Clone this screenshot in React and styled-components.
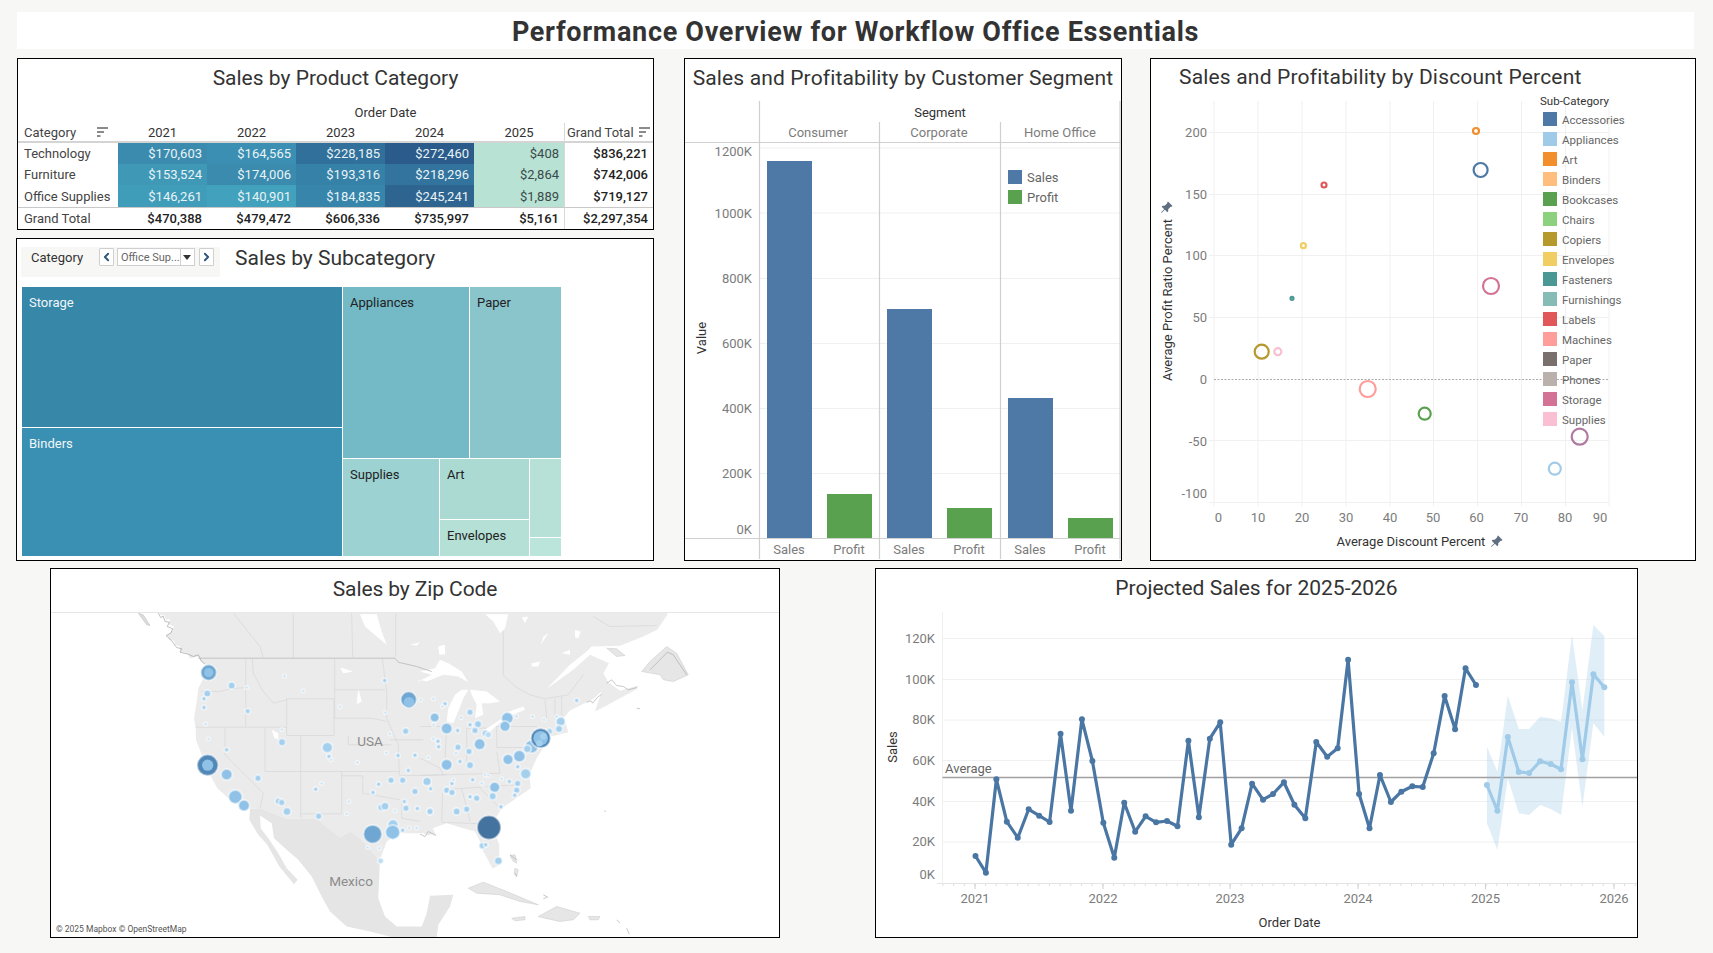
import React from 'react'
import styled, { createGlobalStyle } from 'styled-components'
import { BsPinAngleFill } from 'react-icons/bs'
import { ChevronLeft, ChevronRight } from 'lucide-react'

const Global = createGlobalStyle`
  html, body { margin: 0; padding: 0; background: #f7f7f5; }
  * { box-sizing: border-box; }
`

const Page = styled.div`
  width: 1713px;
  height: 953px;
  overflow: hidden;
  padding-top: 12px;
  background: #f7f7f5;
  font-family: Roboto, "Noto Sans", sans-serif;
  color: #333;
`
const TitleBar = styled.h1`
  margin: 0 19px 9px 17px;
  height: 37px;
  padding-top: 2px;
  background: #fff;
  text-align: center;
  font-size: 27px;
  line-height: 37px;
  letter-spacing: 0.7px;
  font-weight: 700;
  color: #333;
`
const TopRow = styled.div`
  display: flex;
  height: 503px;
  padding-left: 16px;
`
const LeftColumn = styled.div`
  width: 638px;
  display: flex;
  flex-direction: column;
  gap: 8px;
  margin-right: 30px;
`
const BottomRow = styled.div`
  display: flex;
  height: 370px;
  margin-top: 7px;
  padding-left: 50px;
`
const Panel = styled.section`
  background: #fff;
  border: 1px solid #000;
  width: ${p => p.$w}px;
  height: ${p => p.$h ? p.$h + 'px' : '100%'};
  margin-left: ${p => p.$ml || 0}px;
  margin-right: ${p => p.$mr || 0}px;
  flex-shrink: 0;
  overflow: hidden;
`
const PanelTitle = styled.h2`
  margin: 0;
  height: ${p => p.$h || 42}px;
  line-height: ${p => p.$lh || 38}px;
  font-size: 21px;
  font-weight: 400;
  color: #333;
  letter-spacing: ${p => p.$ls || 0}px;
  text-align: ${p => p.$left ? 'left' : 'center'};
  padding-left: ${p => p.$left || 0}px;
  border-bottom: ${p => p.$rule ? '1px solid #e6e6e6' : 'none'};
  white-space: nowrap;
`
const Table = styled.div`
  display: grid;
  grid-template-columns: 100px repeat(4, 89px) 90px 89px;
  grid-template-rows: 20px 20px 21px 21px 22px 22px;
  font-size: 13px;
`
const Cell = styled.div`
  display: flex;
  align-items: center;
  justify-content: ${p => p.$align || 'flex-end'};
  padding: 0 ${p => p.$pad ?? 5}px 0 ${p => p.$padL ?? 0}px;
  background: ${p => p.$bg || 'transparent'};
  color: ${p => p.$color || '#222'};
  font-weight: ${p => p.$bold ? 500 : 400};
  border-left: ${p => p.$divider ? '1px solid #d8d8d8' : 'none'};
  border-bottom: ${p => p.$rule ? '2px solid #d4d4d4' : 'none'};
  border-top: ${p => p.$top ? '1px solid #c8c8c8' : 'none'};
  white-space: nowrap;
`
const OrderDate = styled.div`
  grid-column: 2 / 8;
  display: flex;
  justify-content: center;
  align-items: center;
  padding-bottom: 2px;
  color: #333;
  font-size: 13px;
`
const SortLines = styled.svg`
  width: 11px;
  height: 11px;
  flex-shrink: 0;
  margin-left: ${p => p.$ml}px;
`
const SubHeader = styled.div`
  display: flex;
  padding: 8px 0 0 4px;
`
const FilterBox = styled.div`
  width: 199px;
  height: 30px;
  background: #f7f7f5;
  display: flex;
  align-items: flex-start;
  padding: 1px 0 0 10px;
  margin-right: 15px;
  font-size: 13px;
  color: #333;
`
const FilterLabel = styled.span`
  width: 68px;
  line-height: 20px;
`
const StepButton = styled.div`
  width: 15px;
  height: 18px;
  background: #fff;
  border: 1px solid #cfcfcf;
  border-radius: 1px;
  display: flex;
  align-items: center;
  justify-content: center;
  color: #2f5679;
  margin-right: ${p => p.$mr || 0}px;
`
const Dropdown = styled.div`
  width: 78px;
  height: 18px;
  background: #fff;
  border: 1px solid #cfcfcf;
  display: flex;
  align-items: center;
  margin-right: 4px;
  font-size: 11px;
  color: #666;
`
const DropdownText = styled.span`
  flex: 1;
  padding-left: 3px;
  white-space: nowrap;
`
const DropdownArrow = styled.span`
  width: 18px;
  height: 100%;
  border-left: 1px solid #cfcfcf;
  display: flex;
  align-items: center;
  justify-content: center;
  &::before {
    content: "";
    border-left: 4.5px solid transparent;
    border-right: 4.5px solid transparent;
    border-top: 5px solid #333;
  }
`
const SubTitle = styled.h2`
  margin: 0;
  font-size: 21px;
  font-weight: 400;
  line-height: 22px;
  color: #333;
`
const Treemap = styled.div`
  display: flex;
  gap: 1px;
  width: 539px;
  height: 269px;
  margin: 10px 0 0 5px;
  background: #fff;
`
const TreeColumn = styled.div`
  display: flex;
  flex-direction: column;
  gap: 1px;
  width: ${p => p.$w ? p.$w + 'px' : 'auto'};
  height: ${p => p.$h ? p.$h + 'px' : '100%'};
  flex-shrink: 0;
`
const TreeRow = styled.div`
  display: flex;
  gap: 1px;
  height: ${p => p.$h}px;
  flex-shrink: 0;
`
const Tile = styled.div`
  background: ${p => p.$bg};
  color: ${p => p.$dark ? '#f1f6f8' : '#222'};
  width: ${p => p.$w ? p.$w + 'px' : 'auto'};
  height: ${p => p.$h ? p.$h + 'px' : 'auto'};
  flex: ${p => (p.$w || p.$h) ? '0 0 auto' : '1'};
  font-size: 13px;
  line-height: 16px;
  padding: 8px 0 0 7px;
`
const ChartSvg = styled.svg`
  display: block;
  overflow: visible;
`
const Label = styled.text`
  font-size: ${p => p.$size || 13}px;
  fill: ${p => p.$fill || '#7c7c7c'};
  text-anchor: ${p => p.$anchor || 'middle'};
  dominant-baseline: central;
`
const Grid = styled.line`
  stroke: ${p => p.$stroke || '#f0f0f0'};
  stroke-width: ${p => p.$width || 1};
  stroke-dasharray: ${p => p.$dash || 'none'};
`

const SortIcon = ({ ml }) => (
  <SortLines $ml={ml} viewBox="0 0 11 11">
    <path d="M0 1h11M0 5h7M0 9h3.5" stroke="#666" strokeWidth="1.6" fill="none" />
  </SortLines>
)

const TABLE = [
  ['Technology', [['$170,603', '#3b8bae'], ['$164,565', '#3a8fb2'], ['$228,185', '#30709a'], ['$272,460', '#2a5b8a'], ['$408', '#b8e2d4']], '$836,221'],
  ['Furniture', [['$153,524', '#3f98b6'], ['$174,006', '#3a8bae'], ['$193,316', '#3681a8'], ['$218,296', '#32749e'], ['$2,864', '#b8e2d4']], '$742,006'],
  ['Office Supplies', [['$146,261', '#409db9'], ['$140,901', '#42a1bc'], ['$184,835', '#3785aa'], ['$245,241', '#2e6590'], ['$1,889', '#b8e2d4']], '$719,127'],
]
const TOTALS = ['$470,388', '$479,472', '$606,336', '$735,997', '$5,161', '$2,297,354']

const SalesTable = () => (
  <Table>
    <div />
    <OrderDate>Order Date</OrderDate>
    <Cell $align="flex-start" $padL={6} $rule $color="#444">Category<SortIcon ml={21} /></Cell>
    {['2021', '2022', '2023', '2024', '2025'].map(y => <Cell key={y} $align="center" $pad={0} $rule $color="#333">{y}</Cell>)}
    <Cell $align="flex-start" $padL={2} $pad={0} $rule $divider $color="#444">Grand Total<SortIcon ml={5} /></Cell>
    {TABLE.map(([name, cells, total]) => (
      <React.Fragment key={name}>
        <Cell $align="flex-start" $padL={6} $color="#444">{name}</Cell>
        {cells.map(([v, bg], i) => <Cell key={v} $bg={bg} $color={i < 4 ? '#e9f3f6' : '#3a4a4a'}>{v}</Cell>)}
        <Cell $divider $bold>{total}</Cell>
      </React.Fragment>
    ))}
    <Cell $align="flex-start" $padL={6} $color="#444" $top>Grand Total</Cell>
    {TOTALS.map((v, i) => <Cell key={v} $bold $top $divider={i === 5}>{v}</Cell>)}
  </Table>
)

const SubcategoryTree = () => (
  <Treemap>
    <TreeColumn $w={320}>
      <Tile $bg="#3687a8" $dark $h={140}>Storage</Tile>
      <Tile $bg="#3990b3" $dark>Binders</Tile>
    </TreeColumn>
    <TreeColumn $w={218}>
      <TreeRow $h={171}>
        <Tile $bg="#73b9c6" $w={126}>Appliances</Tile>
        <Tile $bg="#8ac5cc">Paper</Tile>
      </TreeRow>
      <TreeRow $h={97}>
        <Tile $bg="#9dd2d2" $w={96}>Supplies</Tile>
        <TreeColumn $w={89}>
          <Tile $bg="#aadad2" $h={60}>Art</Tile>
          <Tile $bg="#b4e0d5">Envelopes</Tile>
        </TreeColumn>
        <TreeColumn $w={31}>
          <Tile $bg="#b7e1d6" $h={78} />
          <Tile $bg="#bbe4da" />
        </TreeColumn>
      </TreeRow>
    </TreeColumn>
  </Treemap>
)

const SEGMENT_GRID = [148, 213, 278.5, 343.5, 408.5, 473.5]
const SEGMENT_TICKS = [['1200K', 151], ['1000K', 213], ['800K', 278], ['600K', 343], ['400K', 408], ['200K', 473], ['0K', 529]]
const SEGMENT_BARS = [
  [767, 161, '#4e79a7', 'Sales'], [827, 494, '#59a14f', 'Profit'],
  [887, 309, '#4e79a7', 'Sales'], [947, 508, '#59a14f', 'Profit'],
  [1008, 398, '#4e79a7', 'Sales'], [1068, 518, '#59a14f', 'Profit'],
]

const SegmentChart = () => (
  <ChartSvg width="436" height="459" viewBox="685 101 436 459">
    {SEGMENT_GRID.map(y => <Grid key={y} x1="759" x2="1121" y1={y} y2={y} />)}
    <Grid x1="685" x2="1121" y1="142.5" y2="142.5" $stroke="#d0d0d0" $width="1.2" />
    <Grid x1="685" x2="1121" y1="538.5" y2="538.5" $stroke="#d0d0d0" $width="1.2" />
    <Grid x1="759.5" x2="759.5" y1="101" y2="559" $stroke="#cfcfcf" $width="1.2" />
    <Grid x1="879.5" x2="879.5" y1="122" y2="559" $stroke="#cfcfcf" $width="1.2" />
    <Grid x1="1000.5" x2="1000.5" y1="122" y2="559" $stroke="#cfcfcf" $width="1.2" />
    <Grid x1="1120" x2="1120" y1="101" y2="559" $stroke="#cfcfcf" $width="1.2" />
    {SEGMENT_BARS.map(([x, top, fill, name]) => (
      <g key={x}>
        <rect x={x} y={top} width="45" height={538 - top} fill={fill} />
        <Label x={x + 22} y="549">{name}</Label>
      </g>
    ))}
    {SEGMENT_TICKS.map(([t, y]) => <Label key={t} x="752" y={y} $anchor="end">{t}</Label>)}
    <Label x="940" y="112.5" $fill="#333">Segment</Label>
    <Label x="818" y="132.5">Consumer</Label>
    <Label x="939" y="132.5">Corporate</Label>
    <Label x="1060" y="132.5">Home Office</Label>
    <Label x="701" y="338" $fill="#333" transform="rotate(-90 701 338)">Value</Label>
    <rect x="1008" y="170" width="14" height="14" fill="#4e79a7" />
    <Label x="1027" y="177.5" $anchor="start" $fill="#666">Sales</Label>
    <rect x="1008" y="190" width="14" height="14" fill="#59a14f" />
    <Label x="1027" y="197.5" $anchor="start" $fill="#666">Profit</Label>
  </ChartSvg>
)

const SUBCATS = [
  ['Accessories', '#4e79a7'], ['Appliances', '#a0cbe8'], ['Art', '#f28e2b'], ['Binders', '#ffbe7d'],
  ['Bookcases', '#59a14f'], ['Chairs', '#8cd17d'], ['Copiers', '#b6992d'], ['Envelopes', '#f1ce63'],
  ['Fasteners', '#499894'], ['Furnishings', '#86bcb6'], ['Labels', '#e15759'], ['Machines', '#ff9d9a'],
  ['Paper', '#79706e'], ['Phones', '#bab0ac'], ['Storage', '#d37295'], ['Supplies', '#fabfd2'],
]
const DISCOUNT_X = [1214, 1258, 1302, 1346, 1390, 1433.5, 1477.5, 1521.5, 1565.5, 1609]
const DISCOUNT_XT = [['0', 1218.5], ['10', 1258], ['20', 1302], ['30', 1346], ['40', 1390], ['50', 1433], ['60', 1476.5], ['70', 1521], ['80', 1565], ['90', 1600]]
const DISCOUNT_Y = [[132.5, '200', 132], [194.5, '150', 194], [255.5, '100', 255.5], [317.5, '50', 317], [440.5, '-50', 441], [502.5, '-100', 493]]
const RINGS = [
  [1476, 131, 3, '#f28e2b'], [1480.6, 170, 7, '#4e79a7'], [1324, 185, 2.5, '#e15759'],
  [1303.4, 245.7, 2.5, '#f1ce63'], [1491, 286, 8, '#d37295'], [1292, 298.3, 1.5, '#499894'],
  [1261.7, 351.7, 7, '#b6992d'], [1277.8, 351.7, 3.5, '#fabfd2'], [1367.7, 389, 8, '#ff9d9a'],
  [1424.7, 413.7, 6, '#59a14f'], [1579.7, 436.7, 8, '#b07aa1'], [1554.8, 468.7, 6, '#a0cbe8'],
]

const DiscountChart = () => (
  <ChartSvg width="544" height="459" viewBox="1151 101 544 459">
    {DISCOUNT_X.map(x => <Grid key={x} x1={x} x2={x} y1="101" y2="506" />)}
    {DISCOUNT_Y.map(([y]) => <Grid key={y} x1="1209" x2="1609" y1={y} y2={y} />)}
    <Grid x1="1214" x2="1609" y1="379.5" y2="379.5" $stroke="#aaa" $dash="2 1.5" />
    {DISCOUNT_Y.map(([, t, y]) => <Label key={t} x="1207" y={y} $anchor="end">{t}</Label>)}
    <Label x="1207" y="379" $anchor="end">0</Label>
    {DISCOUNT_XT.map(([t, x]) => <Label key={t} x={x} y="517.5">{t}</Label>)}
    <Label x="1411" y="541.5" $fill="#333">Average Discount Percent</Label>
    <BsPinAngleFill x="1490" y="535" size="13" color="#5f6e80" />
    <Label x="1167" y="300" $fill="#333" transform="rotate(-90 1167 300)">Average Profit Ratio Percent</Label>
    <BsPinAngleFill x="1160" y="201" size="13" color="#5f6e80" />
    {RINGS.map(([x, y, r, c]) => (
      <circle key={x} cx={x} cy={y} r={r} fill="none" stroke={c} strokeWidth="2.2" />
    ))}
    <Label x="1540" y="101" $anchor="start" $size={11.5} $fill="#333">Sub-Category</Label>
    {SUBCATS.map(([name, c], i) => (
      <g key={name}>
        <rect x="1543" y={112 + i * 20} width="14" height="14" fill={c} />
        <Label x="1562" y={119.5 + i * 20} $anchor="start" $size={11.5} $fill="#666">{name}</Label>
      </g>
    ))}
  </ChartSvg>
)

// map outlines were read off two crops of the picture, so points come in crop coordinates
const W = (x, y) => [130 + x / 3, 612 + y / 3]
const E = (x, y) => [420 + x / 3, 612 + y / 3]
const pts = (conv, list) => list.map(([x, y]) => conv(x, y))
const str = list => list.map(p => p[0].toFixed(1) + ',' + p[1].toFixed(1)).join(' ')

const LAND_WEST = [[85, 3], [95, 12], [102, 10], [108, 25], [120, 22], [116, 38], [132, 45], [126, 60], [110, 72], [118, 85], [132, 88], [136, 100], [150, 105], [150, 120], [172, 125], [180, 140], [205, 135], [212, 150], [228, 160], [218, 172], [212, 190], [218, 205], [205, 230], [200, 270], [192, 320], [197, 350], [198, 385], [215, 430], [235, 480], [262, 530], [300, 565], [330, 575], [360, 592], [390, 590], [470, 622], [512, 622], [560, 620], [595, 650], [630, 678], [660, 660], [690, 680], [730, 725], [750, 745], [770, 690], [810, 665], [880, 665], [895, 672], [905, 668], [920, 672]]
const LAND_EAST = [[50, 675], [38, 650], [80, 635], [130, 650], [165, 660], [178, 685], [190, 720], [218, 772], [237, 760], [238, 700], [215, 640], [245, 590], [292, 558], [332, 530], [328, 490], [350, 440], [375, 400], [392, 375], [445, 362], [432, 318], [450, 297], [500, 272], [520, 262], [545, 240], [525, 300], [560, 282], [652, 232], [655, 222], [600, 238], [565, 212], [550, 185], [567, 155], [510, 130], [460, 175], [380, 232], [450, 160], [500, 120], [515, 105], [600, 103], [670, 75], [712, 55], [742, 10], [742, 3]]
const MAINLAND = str([...pts(W, LAND_WEST), ...pts(E, LAND_EAST)])
const MEXICO = str([
  ...pts(W, [[360, 592], [358, 625], [385, 670], [412, 700], [448, 765], [492, 818], [503, 805], [470, 770], [445, 725], [415, 680], [392, 650], [390, 612], [425, 635], [432, 680], [470, 715], [505, 745], [545, 795], [575, 855], [600, 900], [650, 945], [720, 960], [790, 978]]),
  ...pts(E, [[50, 978], [55, 940], [90, 885], [100, 850], [30, 853]]),
  ...pts(W, [[890, 905], [875, 945], [800, 945], [765, 915], [745, 860], [748, 790], [750, 745], [730, 725], [690, 680], [660, 660], [630, 678], [595, 650], [560, 620], [512, 622], [470, 622], [390, 590]]),
])
const ISLANDS = [
  [[665, 180], [690, 150], [740, 105], [770, 125], [805, 190], [760, 210], [730, 205], [720, 190]],
  [[145, 830], [190, 812], [260, 840], [355, 880], [300, 870], [240, 850], [170, 845]],
  [[355, 915], [410, 885], [480, 905], [460, 925], [420, 930], [375, 920]],
  [[275, 920], [315, 915], [315, 925], [285, 928]],
  [[505, 915], [540, 915], [535, 925], [510, 925]],
  [[560, 110], [590, 112], [615, 132], [590, 135]],
  [[270, 732], [285, 730], [290, 755], [280, 750]],
  [[285, 770], [295, 775], [290, 795], [282, 785]],
].map(l => str(pts(E, l)))
const ALASKA = str(pts(W, [[25, 5], [40, 10], [60, 42], [50, 40]]))
const LAKES = [
  [...pts(W, [[860, 212], [905, 190]]), ...pts(E, [[0, 180], [45, 170], [60, 145], [85, 155], [125, 180], [145, 212], [115, 195], [70, 190], [20, 210], [0, 205]])],
  pts(E, [[125, 235], [105, 250], [85, 290], [80, 330], [100, 335], [115, 300], [130, 260], [145, 235]]),
  pts(E, [[150, 235], [200, 240], [240, 270], [210, 275], [185, 275], [190, 310], [165, 320], [170, 280], [155, 250]]),
  pts(E, [[195, 355], [240, 325], [250, 325], [210, 360]]),
  pts(E, [[255, 305], [310, 285], [315, 295], [265, 315]]),
  pts(E, [[195, 8], [265, 8], [255, 50], [240, 65], [220, 30]]),
  pts(E, [[55, 105], [72, 100], [76, 128], [58, 130]]),
  pts(E, [[305, 18], [325, 15], [315, 35]]),
  pts(E, [[385, 65], [362, 100], [370, 75]]),
  pts(E, [[465, 55], [482, 60], [475, 80], [465, 78]]),
  pts(E, [[425, 125], [450, 115], [450, 130]]),
  pts(E, [[335, 155], [360, 150], [355, 165], [335, 165]]),
  pts(W, [[690, 8], [740, 8], [755, 60], [770, 100], [740, 75], [705, 45]]),
  pts(W, [[840, 100], [870, 92], [860, 102]]),
  pts(W, [[925, 110], [945, 100], [945, 125], [928, 125]]),
  pts(W, [[425, 355], [445, 365], [445, 385], [432, 378]]),
  pts(W, [[630, 168], [670, 180], [640, 185]]),
  pts(W, [[685, 230], [695, 270], [680, 278]]),
].map(str)
const BORDERS_W = [
  [[205, 140], [795, 140], [805, 152], [860, 165], [905, 180]],
  [[215, 240], [270, 240], [300, 232], [348, 228]],
  [[347, 140], [347, 345]], [[367, 140], [370, 185], [400, 240], [430, 275], [470, 265]],
  [[197, 347], [470, 347]], [[470, 262], [612, 262], [612, 372], [470, 372], [470, 262]],
  [[614, 140], [614, 320], [725, 320], [770, 330]], [[614, 235], [765, 235]],
  [[757, 140], [770, 240], [770, 320], [805, 400], [808, 490]],
  [[512, 372], [512, 620]], [[655, 372], [655, 400], [785, 400]], [[405, 347], [405, 480], [655, 480]],
  [[635, 480], [635, 607], [512, 607]], [[635, 493], [698, 493], [698, 545], [810, 565]],
  [[655, 480], [808, 480]], [[285, 347], [285, 430], [400, 545], [390, 590]],
  [[780, 385], [880, 385]], [[808, 493], [950, 490]], [[815, 565], [815, 620], [870, 630]],
  [[310, 5], [390, 105], [400, 138]], [[490, 5], [490, 138]], [[665, 5], [668, 138]], [[797, 5], [797, 135]],
]
const BORDERS_E = [
  [[0, 492], [240, 485]], [[140, 350], [140, 450]], [[80, 350], [75, 440]], [[65, 535], [185, 527]],
  [[125, 530], [150, 630]], [[68, 540], [65, 630]], [[65, 632], [210, 638]], [[180, 530], [240, 590]],
  [[200, 525], [290, 520]], [[230, 345], [230, 408], [330, 408]], [[230, 345], [350, 345]],
  [[375, 265], [380, 320]], [[405, 260], [405, 320]], [[425, 255], [425, 310]], [[140, 350], [200, 350]],
  [[0, 345], [80, 345]], [[0, 440], [60, 470], [70, 490]], [[240, 485], [230, 420]],
  [[250, 60], [250, 190], [285, 225], [330, 250], [375, 262], [445, 250], [490, 190]],
  [[520, 15], [570, 45], [710, 42]],
]
// dark jagged coast where the reference has fjords and islets
const COAST_W = [[[85, 5], [92, 18], [100, 14], [105, 30], [118, 32], [112, 45], [128, 52], [122, 65], [108, 72], [125, 88], [140, 108], [155, 112], [150, 122], [175, 128], [190, 135], [205, 130], [215, 150], [225, 158]]]
const COAST_E = [
  [[500, 272], [512, 268], [518, 275], [532, 258], [545, 248]],
  [[560, 215], [575, 205], [590, 222], [610, 225], [625, 235], [650, 228]],
  [[690, 175], [715, 150], [742, 122], [760, 130], [780, 160], [800, 190]],
  [[0, 668], [15, 675], [25, 660], [48, 672]],
  [[270, 730], [280, 738], [292, 745]], [[285, 785], [290, 795]], [[370, 850], [385, 858]], [[370, 862], [380, 858]], [[590, 925], [600, 935]], [[620, 950], [628, 968]], [[553, 598], [558, 600]], [[650, 290], [660, 292]],
]
const BLUE = ['#b9dcf2', '#a4d0ee', '#8fc2e6', '#6fa7d2', '#5288b8', '#44739f']
// x, y, radius in crop pixels, colour step, and 1 for a bubble that sits inside a larger one
const BUBBLES_W = [
  [236, 183, 22, 3], [236, 183, 12, 2, 1], [305, 222, 9, 1], [232, 246, 9, 1], [222, 262, 5, 1], [222, 288, 5, 1], [227, 338, 3, 0], [235, 382, 3, 0], [350, 228, 3, 0], [353, 299, 6, 1], [463, 194, 3, 0], [520, 238, 3, 0], [630, 286, 3, 0], [764, 207, 5, 1],
  [836, 264, 22, 3], [837, 272, 14, 2, 1], [766, 303, 3, 0], [872, 265, 3, 0], [910, 262, 3, 0], [945, 277, 5, 1], [937, 285, 3, 0], [914, 318, 12, 2], [911, 340, 3, 0], [827, 359, 8, 1], [950, 351, 15, 2], [780, 367, 3, 0], [924, 389, 5, 1], [926, 406, 5, 1], [910, 382, 3, 0],
  [456, 392, 9, 1], [456, 354, 3, 0], [592, 408, 14, 1], [597, 435, 5, 1], [603, 445, 3, 0], [290, 415, 5, 1], [233, 461, 30, 4], [233, 461, 15, 2, 1], [290, 489, 15, 2], [316, 556, 19, 2], [342, 582, 15, 2], [384, 500, 8, 1], [557, 533, 5, 1], [575, 516, 3, 0], [445, 569, 8, 1], [455, 573, 8, 1], [471, 600, 10, 1], [566, 614, 8, 1], [650, 607, 3, 0], [657, 570, 3, 0], [682, 453, 3, 0], [769, 424, 3, 0], [804, 432, 5, 1], [855, 431, 5, 1], [895, 438, 3, 0], [835, 477, 5, 1], [950, 460, 15, 2], [746, 518, 5, 1], [729, 543, 5, 1], [783, 506, 8, 1], [818, 506, 8, 1], [891, 510, 11, 1], [902, 532, 5, 1], [855, 540, 8, 1], [950, 537, 8, 1], [823, 570, 5, 1], [828, 590, 8, 1], [795, 598, 3, 0], [862, 591, 5, 1], [900, 600, 8, 1], [753, 588, 8, 1], [765, 584, 10, 1], [789, 640, 14, 1], [788, 662, 20, 2], [728, 668, 26, 3], [818, 656, 5, 1], [838, 649, 3, 0], [860, 649, 3, 0], [713, 708, 3, 0], [748, 710, 3, 0], [752, 748, 7, 0],
]
const BUBBLES_E = [
  [150, 302, 8, 1], [174, 338, 9, 1], [123, 318, 3, 0], [150, 340, 5, 1], [165, 357, 8, 1], [113, 357, 5, 1], [196, 365, 8, 1], [205, 370, 8, 0], [179, 398, 15, 2], [147, 420, 8, 1], [114, 407, 8, 1], [108, 425, 3, 0], [120, 450, 5, 1], [150, 461, 9, 1],
  [262, 320, 16, 2], [255, 344, 14, 2], [290, 314, 3, 0], [338, 315, 3, 0], [372, 325, 3, 0], [422, 330, 12, 1], [417, 352, 9, 1], [388, 360, 8, 1], [470, 267, 5, 1], [410, 315, 3, 0], [335, 405, 18, 2], [322, 412, 10, 1], [362, 380, 28, 4], [362, 380, 20, 2, 1], [370, 375, 8, 1, 1], [358, 395, 8, 1, 1], [298, 434, 16, 2], [264, 444, 14, 2], [293, 466, 5, 1], [317, 487, 14, 1], [293, 516, 8, 1], [268, 510, 5, 1], [224, 527, 14, 2], [290, 536, 8, 1], [218, 554, 9, 1], [284, 551, 5, 1], [245, 502, 3, 0], [204, 492, 3, 0], [158, 505, 5, 1], [96, 516, 5, 1], [100, 505, 3, 0], [150, 556, 5, 1], [170, 560, 8, 1], [80, 536, 8, 1], [96, 543, 8, 1], [30, 600, 8, 1], [110, 600, 9, 1], [140, 593, 8, 1], [243, 586, 5, 1], [207, 648, 34, 5], [187, 703, 8, 1], [197, 700, 5, 1], [235, 748, 10, 1], [195, 490, 3, 0], [185, 515, 3, 0],
]

const Bubble = ({ p, r, level, inner }) => (
  <circle
    cx={p[0]}
    cy={p[1]}
    r={r / 3 + 0.6}
    fill={BLUE[level]}
    stroke={inner ? 'none' : '#fff'}
    strokeOpacity="0.5"
    strokeWidth="2"
  />
)

const ZipMap = () => (
  <ChartSvg width="728" height="324" viewBox="51 613.5 728 324">
    <polygon points={MAINLAND} fill="#ebebeb" />
    <polygon points={MEXICO} fill="#e5e5e5" />
    <polygon points={ALASKA} fill="#dcdcdc" stroke="#bbb" strokeWidth="0.5" />
    {ISLANDS.map((p, i) => <polygon key={i} points={p} fill="#e6e6e6" stroke="#bdbdbd" strokeWidth="0.4" />)}
    {LAKES.map((p, i) => <polygon key={i} points={p} fill="#fff" />)}
    {BORDERS_W.map((l, i) => <polyline key={i} points={str(pts(W, l))} fill="none" stroke={i === 0 ? '#c2c2c2' : '#d4d4d4'} strokeWidth={i === 0 ? 1 : 0.6} />)}
    {BORDERS_E.map((l, i) => <polyline key={i} points={str(pts(E, l))} fill="none" stroke="#d4d4d4" strokeWidth="0.6" />)}
    {COAST_W.map((l, i) => <polyline key={i} points={str(pts(W, l))} fill="none" stroke="#a4a4a4" strokeWidth="0.7" />)}
    {COAST_E.map((l, i) => <polyline key={i} points={str(pts(E, l))} fill="none" stroke="#a4a4a4" strokeWidth="0.6" />)}
    <Label x="370" y="741" $size={13.5} $fill="#8c8c8c">USA</Label>
    <Label x="351" y="881" $size={13.5} $fill="#8c8c8c">Mexico</Label>
    {BUBBLES_W.map(([x, y, r, l, inner], i) => <Bubble key={'w' + i} p={W(x, y)} r={r} level={l} inner={inner} />)}
    {BUBBLES_E.map(([x, y, r, l, inner], i) => <Bubble key={'e' + i} p={E(x, y)} r={r} level={l} inner={inner} />)}
    <rect x="53" y="922" width="129" height="14" fill="#fff" fillOpacity="0.6" />
    <Label x="56" y="929.5" $anchor="start" $size={8.5} $fill="#555">© 2025 Mapbox © OpenStreetMap</Label>
  </ChartSvg>
)

const F = (x, y) => [870 + x / 2.01, 565 + y / 3]
const HIST_X = [212, 233, 254, 275, 297, 319, 340, 361, 383, 404, 426, 447, 469, 491, 511, 533, 554, 575, 597, 618, 640, 661, 683, 704, 726, 747, 768, 790, 810, 832, 853, 875, 897, 919, 940, 961, 983, 1004, 1025, 1047, 1068, 1090, 1111, 1133, 1155, 1176, 1197, 1218]
const HIST_Y = [873, 923, 643, 770, 818, 733, 752, 771, 506, 737, 463, 588, 773, 878, 713, 800, 754, 772, 768, 784, 527, 757, 521, 472, 839, 790, 656, 704, 687, 652, 719, 760, 531, 575, 550, 284, 687, 790, 630, 711, 680, 664, 666, 565, 393, 493, 310, 360]
const FC_X = [1240, 1261, 1282, 1304, 1325, 1347, 1368, 1389, 1411, 1432, 1454, 1476]
const FC_Y = [660, 737, 516, 621, 624, 589, 597, 613, 352, 583, 328, 367]
const FC_UP = [545, 620, 392, 492, 492, 455, 460, 470, 210, 435, 180, 213]
const FC_LOW = [775, 855, 640, 745, 750, 720, 732, 750, 490, 725, 475, 515]
const HIST = HIST_X.map((x, i) => F(x, HIST_Y[i]))
const FORECAST = FC_X.map((x, i) => F(x, FC_Y[i]))
const BAND = [...FC_X.map((x, i) => F(x, FC_UP[i])), ...FC_X.map((x, i) => F(x, FC_LOW[i])).reverse()]
const SALES_GRID = [['120K', 638.5, 638], ['100K', 679.5, 679], ['80K', 720, 719], ['60K', 760.5, 760], ['40K', 801.5, 801], ['20K', 842, 841], ['0K', null, 874]]
const YEARS = [['2021', 975], ['2022', 1103], ['2023', 1230], ['2024', 1358], ['2025', 1485.5], ['2026', 1614]]

const ForecastChart = () => {
  const minor = []
  for (let x = 943; x < 1636; x += 10.65) minor.push(x)
  return (
    <ChartSvg width="761" height="328" viewBox="876 609 761 328">
      {SALES_GRID.filter(g => g[1]).map(([t, y]) => <Grid key={t} x1="942" x2="1637" y1={y} y2={y} />)}
      <Grid x1="942.5" x2="942.5" y1="612" y2="883" />
      <Grid x1="937" x2="1637" y1="883.5" y2="883.5" $stroke="#e4e4e4" />
      {minor.map(x => <Grid key={x} x1={x} x2={x} y1="884" y2="886" $stroke="#ddd" />)}
      {YEARS.map(([, x]) => <Grid key={x} x1={x} x2={x} y1="884" y2="889" $stroke="#ccc" />)}
      {SALES_GRID.map(([t, , y]) => <Label key={t} x="935" y={y} $anchor="end">{t}</Label>)}
      {YEARS.map(([t, x]) => <Label key={t} x={x} y="898">{t}</Label>)}
      <Label x="1289.5" y="922.5" $fill="#333">Order Date</Label>
      <Label x="892" y="747" $fill="#333" transform="rotate(-90 892 747)">Sales</Label>
      <polygon points={str(BAND)} fill="#a0cbe8" fillOpacity="0.32" />
      <Grid x1="942.5" x2="1637" y1="777.5" y2="777.5" $stroke="#a0a0a0" $width="1.5" />
      <Label x="945" y="768" $anchor="start" $fill="#666">Average</Label>
      <polyline points={str(HIST)} fill="none" stroke="#4a76a4" strokeWidth="3.2" strokeLinejoin="round" />
      {HIST.map((p, i) => <circle key={i} cx={p[0]} cy={p[1]} r="3" fill="#4a76a4" />)}
      <polyline points={str(FORECAST)} fill="none" stroke="#a0cbe8" strokeWidth="3.2" strokeLinejoin="round" />
      {FORECAST.map((p, i) => <circle key={i} cx={p[0]} cy={p[1]} r="3" fill="#a0cbe8" />)}
    </ChartSvg>
  )
}

export default function App() {
  return (
    <Page>
      <Global />
      <TitleBar>Performance Overview for Workflow Office Essentials</TitleBar>
      <TopRow>
        <LeftColumn>
          <Panel $w={637} $ml={1} $h={172}>
            <PanelTitle $h={44}>Sales by Product Category</PanelTitle>
            <SalesTable />
          </Panel>
          <Panel $w={638} $h={323}>
            <SubHeader>
              <FilterBox>
                <FilterLabel>Category</FilterLabel>
                <StepButton $mr={3}><ChevronLeft size={14} strokeWidth={3.5} /></StepButton>
                <Dropdown><DropdownText>Office Sup...</DropdownText><DropdownArrow /></Dropdown>
                <StepButton><ChevronRight size={14} strokeWidth={3.5} /></StepButton>
              </FilterBox>
              <SubTitle>Sales by Subcategory</SubTitle>
            </SubHeader>
            <SubcategoryTree />
          </Panel>
        </LeftColumn>
        <Panel $w={438} $mr={28}>
          <PanelTitle $lh={38} $ls={0.13}>Sales and Profitability by Customer Segment</PanelTitle>
          <SegmentChart />
        </Panel>
        <Panel $w={546}>
          <PanelTitle $left={28} $lh={37} $ls={0.18}>Sales and Profitability by Discount Percent</PanelTitle>
          <DiscountChart />
        </Panel>
      </TopRow>
      <BottomRow>
        <Panel $w={730} $mr={95}>
          <PanelTitle $h={44} $lh={41} $ls={-0.1} $rule>Sales by Zip Code</PanelTitle>
          <ZipMap />
        </Panel>
        <Panel $w={763}>
          <PanelTitle $h={40} $lh={38}>Projected Sales for 2025-2026</PanelTitle>
          <ForecastChart />
        </Panel>
      </BottomRow>
    </Page>
  )
}
